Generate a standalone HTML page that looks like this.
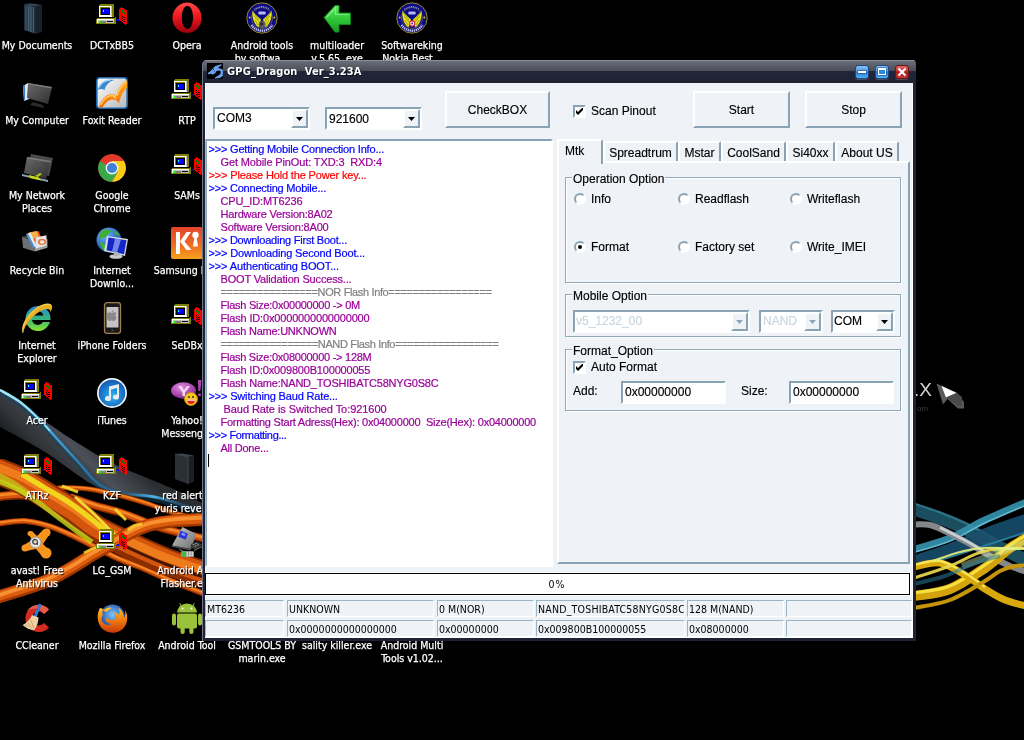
<!DOCTYPE html>
<html><head><meta charset="utf-8"><title>GPG_Dragon</title>
<style>
html,body{margin:0;padding:0;background:#000;}
body{width:1024px;height:740px;overflow:hidden;position:relative;font-family:"Liberation Sans",sans-serif;}
.abs,#win *{position:absolute;box-sizing:border-box;}
#desk{will-change:transform;position:absolute;left:0;top:0;width:1024px;height:740px;overflow:hidden;background:#000;}
.lbl{position:absolute;width:120px;text-align:center;color:#fff;font-family:"DejaVu Sans Condensed","DejaVu Sans",sans-serif;font-size:10.5px;line-height:13px;white-space:pre;text-shadow:1px 1px 1px #000;-webkit-text-stroke:.25px #fff;}
.ico{position:absolute;width:32px;height:32px;}
#win{will-change:transform;position:absolute;left:202px;top:60px;width:714px;height:581px;background:#1f2233;border-radius:5px 4px 0 0;overflow:hidden;}
#title{left:0;top:0;width:714px;height:23px;background:linear-gradient(#6e707c 0,#4a4c58 11px,#22263a 11px,#1f2233 23px);}
#ttext{left:25px;top:5px;letter-spacing:.14px;color:#fff;font-family:"DejaVu Sans Condensed","DejaVu Sans",sans-serif;font-weight:bold;font-size:11px;line-height:14px;white-space:pre;text-shadow:1px 1px 0 #0c0e18;}
#client{left:3px;top:23px;width:708px;height:555px;background:#eff3f7;overflow:hidden;box-shadow:inset 1px 0 0 #fff,inset -1px -1px 0 #fff}
.btn{border:2px solid;border-color:#fff #88a4b4 #88a4b4 #fff;background:#eff3f7;font-size:12px;text-align:center;color:#000;}
.sunk{border:2px solid;border-color:#88a4b4 #fff #fff #88a4b4;background:#fff;}
.t12{font-size:12px;line-height:14px;color:#000;white-space:pre;-webkit-text-stroke:.15px;}
.log{font-size:11px;line-height:13px;white-space:pre;-webkit-text-stroke:.2px;}
.b{color:#0000ff}.p{color:#990099}.r{color:#ff0000}.g{color:#808080}.m{color:#cc00cc}
.grp{border:1px solid #8fabbb;box-shadow:inset 1px 1px 0 #fff,1px 1px 0 #fff;}
.cell{border:1px solid;border-color:#9db5c3 #fff #fff #9db5c3;font-family:"DejaVu Sans Condensed","DejaVu Sans",sans-serif;font-size:10.5px;line-height:17px;white-space:pre;overflow:hidden;color:#000;padding-left:1px;height:17px;}
.tab{border:2px solid;border-color:#fff #88a4b4 #eff3f7 #fff;border-bottom:none;background:#eff3f7;border-radius:2px 2px 0 0;text-align:center;line-height:20px}
.gl{background:#eff3f7;padding:0 1px;}
.dis{color:#c8d6de;}
.rad{width:12px;height:12px;border-radius:50%;background:#fff;border:2px solid;border-color:#88a4b4 #fff #fff #88a4b4;transform:rotate(0deg)}
.rad i{left:2px;top:2px;width:4px;height:4px;border-radius:50%;background:#000;}
.tb{width:14px;height:14px;border:1px solid;border-radius:3px;box-shadow:0 1px 0 rgba(255,255,255,.18);}
</style></head><body>
<div id="desk">
<!--WS-->
<svg class="abs" style="left:0;top:0" width="1024" height="740" viewBox="0 0 1024 740">
<defs>
<linearGradient id="wGray" gradientUnits="userSpaceOnUse" x1="40" y1="470" x2="90" y2="420"><stop offset="0" stop-color="#1a1c1f"/><stop offset=".22" stop-color="#2e3135"/><stop offset=".45" stop-color="#3c4045"/><stop offset=".56" stop-color="#4c5159"/><stop offset="1" stop-color="#2b2e33"/></linearGradient>
<linearGradient id="wCy" gradientUnits="userSpaceOnUse" x1="0" y1="0" x2="205" y2="0"><stop offset="0" stop-color="#9ae4f6"/><stop offset=".2" stop-color="#4ab0e0"/><stop offset=".45" stop-color="#2a6c9c"/><stop offset=".62" stop-color="#2a5a80"/><stop offset=".75" stop-color="#4ab4e4"/><stop offset=".9" stop-color="#2a5a80" stop-opacity=".4"/><stop offset="1" stop-color="#2a5a80" stop-opacity="0"/></linearGradient>
<filter id="bl1" x="-5%" y="-5%" width="110%" height="110%"><feGaussianBlur stdDeviation="0.6"/></filter>
<filter id="bl2" x="-5%" y="-5%" width="110%" height="110%"><feGaussianBlur stdDeviation="1.6"/></filter>
</defs>
<g filter="url(#bl1)"><path d="M-2.0 388.0C1.7 390.3 14.3 398.0 20.0 402.0C25.7 406.0 26.7 408.0 32.0 412.0C37.3 416.0 45.2 421.3 52.0 426.0C58.8 430.7 63.3 434.0 73.0 440.0C82.7 446.0 96.8 455.3 110.0 462.0C123.2 468.7 140.3 475.0 152.0 480.0C163.7 485.0 170.3 487.5 180.0 492.0C189.7 496.5 205.0 504.5 210.0 507.0L210.0 516.0C201.7 513.3 173.3 503.3 160.0 500.0C146.7 496.7 138.7 497.5 130.0 496.0C121.3 494.5 114.0 492.8 108.0 491.0C102.0 489.2 97.8 486.8 94.0 485.0C90.2 483.2 89.8 483.2 85.0 480.0C80.2 476.8 71.7 470.7 65.0 466.0C58.3 461.3 51.8 456.3 45.0 452.0C38.2 447.7 31.5 444.2 24.0 440.0C16.5 435.8 4.0 429.2 0.0 427.0Z" fill="url(#wGray)"/>
<path d="M0.0 392.0C3.3 394.0 13.3 399.0 20.0 404.0C26.7 409.0 33.3 415.3 40.0 422.0C46.7 428.7 53.3 436.7 60.0 444.0C66.7 451.3 74.3 459.7 80.0 466.0C85.7 472.3 89.3 477.8 94.0 482.0C98.7 486.2 102.0 488.7 108.0 491.0C114.0 493.3 121.3 494.5 130.0 496.0C138.7 497.5 147.5 497.0 160.0 500.0C172.5 503.0 197.5 511.7 205.0 514.0" fill="none" stroke="#15405c" stroke-width="6" opacity=".55"/>
<path d="M0.0 390.0C3.3 392.0 13.3 397.0 20.0 402.0C26.7 407.0 33.3 413.3 40.0 420.0C46.7 426.7 53.3 434.7 60.0 442.0C66.7 449.3 74.3 457.7 80.0 464.0C85.7 470.3 89.3 475.8 94.0 480.0C98.7 484.2 102.0 486.7 108.0 489.0C114.0 491.3 121.3 492.5 130.0 494.0C138.7 495.5 147.5 495.0 160.0 498.0C172.5 501.0 197.5 509.7 205.0 512.0" fill="none" stroke="url(#wCy)" stroke-width="2.6"/>
<path d="M0.0 390.0C3.3 392.0 13.3 397.0 20.0 402.0C26.7 407.0 35.0 415.2 40.0 420.0C45.0 424.8 48.3 429.2 50.0 431.0" fill="none" stroke="#a8ecfa" stroke-width="1.6" opacity=".8"/></g>
<g fill="none" filter="url(#bl1)">
<path d="M-5.0 524.0C-0.2 523.5 15.0 520.7 24.0 521.0C33.0 521.3 40.5 523.5 48.7 526.0C56.9 528.5 65.0 532.3 73.0 536.0C81.0 539.7 89.3 544.2 97.0 548.0C104.7 551.8 111.2 555.5 119.0 559.0C126.8 562.5 135.4 565.3 143.6 568.7C151.8 572.1 156.9 575.1 168.0 579.6C179.1 584.1 203.0 593.3 210.0 596.0" stroke="#8a2c02" stroke-width="6"/><path d="M-5.0 523.6C-0.2 523.1 15.0 520.3 24.0 520.6C33.0 521.0 40.5 523.1 48.7 525.6C56.9 528.1 65.0 532.0 73.0 535.6C81.0 539.3 89.3 543.8 97.0 547.6C104.7 551.5 111.2 555.2 119.0 558.6C126.8 562.1 135.4 564.9 143.6 568.3C151.8 571.8 156.9 574.7 168.0 579.2C179.1 583.8 203.0 592.9 210.0 595.6" stroke="#d8560c" stroke-width="4.4"/><path d="M-5.0 523.2C-0.2 522.7 15.0 519.8 24.0 520.2C33.0 520.5 40.5 522.7 48.7 525.2C56.9 527.7 65.0 531.5 73.0 535.2C81.0 538.8 89.3 543.3 97.0 547.2C104.7 551.0 111.2 554.7 119.0 558.2C126.8 561.6 135.4 564.4 143.6 567.9C151.8 571.3 156.9 574.2 168.0 578.8C179.1 583.3 203.0 592.4 210.0 595.2" stroke="#f58a28" stroke-width="1.8"/>
<path d="M45.0 490.0C47.5 489.7 55.0 488.3 60.0 488.0C65.0 487.7 69.2 487.7 75.0 488.0C80.8 488.3 86.7 488.5 95.0 490.0C103.3 491.5 115.8 494.6 125.0 497.0C134.2 499.4 141.8 501.8 150.0 504.5C158.2 507.2 164.0 510.1 174.0 513.0C184.0 515.9 204.0 520.5 210.0 522.0" stroke="#8a2c02" stroke-width="5"/><path d="M45.0 489.7C47.5 489.4 55.0 488.0 60.0 487.7C65.0 487.4 69.2 487.4 75.0 487.7C80.8 488.0 86.7 488.2 95.0 489.7C103.3 491.2 115.8 494.3 125.0 496.7C134.2 499.1 141.8 501.5 150.0 504.2C158.2 506.9 164.0 509.8 174.0 512.7C184.0 515.6 204.0 520.2 210.0 521.7" stroke="#d8560c" stroke-width="3.7"/><path d="M45.0 489.3C47.5 489.0 55.0 487.6 60.0 487.3C65.0 487.0 69.2 487.0 75.0 487.3C80.8 487.6 86.7 487.8 95.0 489.3C103.3 490.8 115.8 493.9 125.0 496.3C134.2 498.7 141.8 501.1 150.0 503.8C158.2 506.5 164.0 509.4 174.0 512.3C184.0 515.2 204.0 519.8 210.0 521.3" stroke="#f58a28" stroke-width="1.5"/>
<path d="M70.0 497.0C74.2 498.4 86.8 503.2 95.0 505.7C103.2 508.2 111.9 509.8 119.0 512.0C126.1 514.2 132.4 517.0 137.6 519.0C142.8 521.0 144.9 522.2 150.0 524.0C155.1 525.8 158.0 527.3 168.0 530.0C178.0 532.7 203.0 538.3 210.0 540.0" stroke="#8a2c02" stroke-width="8"/><path d="M70.0 496.5C74.2 498.0 86.8 502.7 95.0 505.2C103.2 507.7 111.9 509.3 119.0 511.5C126.1 513.7 132.4 516.5 137.6 518.5C142.8 520.5 144.9 521.7 150.0 523.5C155.1 525.4 158.0 526.9 168.0 529.5C178.0 532.2 203.0 537.9 210.0 539.5" stroke="#d8560c" stroke-width="5.9"/><path d="M70.0 495.9C74.2 497.3 86.8 502.1 95.0 504.6C103.2 507.1 111.9 508.7 119.0 510.9C126.1 513.1 132.4 515.9 137.6 517.9C142.8 519.9 144.9 521.0 150.0 522.9C155.1 524.7 158.0 526.2 168.0 528.9C178.0 531.5 203.0 537.2 210.0 538.9" stroke="#f58a28" stroke-width="2.4"/>
<path d="M-5.0 497.0C-1.7 496.7 9.2 495.2 15.0 495.0C20.8 494.8 24.2 494.7 30.0 496.0C35.8 497.3 46.7 501.8 50.0 503.0" stroke="#8a2c02" stroke-width="9"/><path d="M-5.0 496.5C-1.7 496.1 9.2 494.6 15.0 494.5C20.8 494.3 24.2 494.1 30.0 495.5C35.8 496.8 46.7 501.3 50.0 502.5" stroke="#d8560c" stroke-width="6.7"/><path d="M-5.0 495.7C-1.7 495.4 9.2 493.9 15.0 493.7C20.8 493.6 24.2 493.4 30.0 494.7C35.8 496.1 46.7 500.6 50.0 501.7" stroke="#f58a28" stroke-width="2.7"/>
<path d="M-5.0 470.0C-0.2 472.0 15.0 477.5 24.0 482.0C33.0 486.5 40.5 491.8 49.0 497.0C57.5 502.2 67.3 507.8 75.0 513.0C82.7 518.2 85.7 522.5 95.0 528.0C104.3 533.5 118.8 540.3 131.0 546.0C143.2 551.7 154.8 557.0 168.0 562.0C181.2 567.0 203.0 573.7 210.0 576.0" stroke="#8a2e02" stroke-width="27"/><path d="M-5.0 468.4C-0.2 470.4 15.0 475.9 24.0 480.4C33.0 484.9 40.5 490.2 49.0 495.4C57.5 500.5 67.3 506.2 75.0 511.4C82.7 516.5 85.7 520.9 95.0 526.4C104.3 531.9 118.8 538.7 131.0 544.4C143.2 550.0 154.8 555.4 168.0 560.4C181.2 565.4 203.0 572.0 210.0 574.4" stroke="#d4540c" stroke-width="20.0"/><path d="M-5.0 466.2C-0.2 468.2 15.0 473.7 24.0 478.2C33.0 482.7 40.5 488.1 49.0 493.2C57.5 498.4 67.3 504.1 75.0 509.2C82.7 514.4 85.7 518.7 95.0 524.2C104.3 529.7 118.8 536.6 131.0 542.2C143.2 547.9 154.8 553.2 168.0 558.2C181.2 563.2 203.0 569.9 210.0 572.2" stroke="#ee7c1c" stroke-width="8.1"/>
<path d="M100.0 533.0C105.2 535.7 119.7 543.7 131.0 549.0C142.3 554.3 154.8 560.0 168.0 565.0C181.2 570.0 203.0 576.7 210.0 579.0" stroke="#200800" stroke-width="3" opacity=".8"/>
<path d="M22.0 474.0C25.8 476.3 37.0 483.2 45.0 488.0C53.0 492.8 61.7 497.3 70.0 503.0C78.3 508.7 88.0 516.2 95.0 522.0C102.0 527.8 109.2 535.3 112.0 538.0" stroke="#f0e020" stroke-width="5.5" opacity=".9"/>
<path d="M-5.0 474.0C-2.5 475.3 4.5 478.7 10.0 482.0C15.5 485.3 25.0 492.0 28.0 494.0" stroke="#c4cc18" stroke-width="7" opacity=".7"/>
<path d="M-5.0 480.0C-1.7 481.3 8.3 484.7 15.0 488.0C21.7 491.3 28.3 495.5 35.0 500.0C41.7 504.5 48.3 510.0 55.0 515.0C61.7 520.0 68.8 525.5 75.0 530.0C81.2 534.5 89.2 540.0 92.0 542.0" stroke="#c8d818" stroke-width="5" opacity=".8"/>
<path d="M75.0 497.0C77.8 499.5 86.5 506.8 92.0 512.0C97.5 517.2 103.3 523.3 108.0 528.0C112.7 532.7 118.0 538.0 120.0 540.0" stroke="#f8e838" stroke-width="3" opacity=".9"/>
<path d="M62.0 486.0C63.3 486.5 67.3 488.0 70.0 489.0C72.7 490.0 76.7 491.5 78.0 492.0" stroke="#f6dc30" stroke-width="3" opacity=".9"/>
<path d="M115.0 509.0C115.8 509.8 118.2 512.2 120.0 514.0C121.8 515.8 125.0 519.0 126.0 520.0" stroke="#f6dc30" stroke-width="3" opacity=".9"/>
<path d="M-5.0 598.0C-0.2 596.5 15.0 592.0 24.0 589.0C33.0 586.0 40.8 583.7 49.0 580.0C57.2 576.3 65.8 571.2 73.0 567.0C80.2 562.8 85.8 558.7 92.0 555.0C98.2 551.3 103.7 548.7 110.0 545.0C116.3 541.3 123.3 536.3 130.0 533.0C136.7 529.7 142.5 527.0 150.0 525.0C157.5 523.0 165.0 522.0 175.0 521.0C185.0 520.0 204.2 519.3 210.0 519.0" stroke="#a03804" stroke-width="13"/><path d="M-5.0 597.2C-0.2 595.7 15.0 591.2 24.0 588.2C33.0 585.2 40.8 582.9 49.0 579.2C57.2 575.6 65.8 570.4 73.0 566.2C80.2 562.1 85.8 557.9 92.0 554.2C98.2 550.6 103.7 547.9 110.0 544.2C116.3 540.6 123.3 535.6 130.0 532.2C136.7 528.9 142.5 526.2 150.0 524.2C157.5 522.2 165.0 521.2 175.0 520.2C185.0 519.2 204.2 518.6 210.0 518.2" stroke="#dc5c0c" stroke-width="9.6"/><path d="M-5.0 596.2C-0.2 594.7 15.0 590.2 24.0 587.2C33.0 584.2 40.8 581.8 49.0 578.2C57.2 574.5 65.8 569.3 73.0 565.2C80.2 561.0 85.8 556.8 92.0 553.2C98.2 549.5 103.7 546.8 110.0 543.2C116.3 539.5 123.3 534.5 130.0 531.2C136.7 527.8 142.5 525.2 150.0 523.2C157.5 521.2 165.0 520.2 175.0 519.2C185.0 518.2 204.2 517.5 210.0 517.2" stroke="#f89030" stroke-width="3.9"/>
<path d="M84.0 553.0C85.3 552.3 89.3 550.2 92.0 549.0C94.7 547.8 98.7 546.5 100.0 546.0" stroke="#f4d030" stroke-width="3" opacity=".85"/>
<path d="M128.0 530.0C129.0 529.3 131.7 527.0 134.0 526.0C136.3 525.0 140.7 524.3 142.0 524.0" stroke="#f4d030" stroke-width="3" opacity=".85"/>
</g>
<g fill="none" filter="url(#bl1)">
<path d="M912.0 508.5C916.7 510.1 931.2 514.7 940.0 518.0C948.8 521.3 955.8 524.0 965.0 528.5C974.2 533.0 984.2 539.4 995.0 545.0C1005.8 550.6 1024.2 559.2 1030.0 562.0" stroke="#1f6076" stroke-width="13" opacity="0.8"/>
<path d="M912.0 503.0C916.7 504.6 931.2 509.2 940.0 512.5C948.8 515.8 955.8 518.6 965.0 523.0C974.2 527.4 990.0 536.3 995.0 539.0" stroke="#3f93ab" stroke-width="2" opacity="0.55"/>
<path d="M912.0 556.0C918.3 553.8 937.0 548.0 950.0 543.0C963.0 538.0 976.7 531.1 990.0 526.0C1003.3 520.9 1023.3 514.8 1030.0 512.5L1030.0 532.0C1023.3 534.2 1003.3 540.7 990.0 545.0C976.7 549.3 963.0 554.3 950.0 558.0C937.0 561.7 918.3 565.5 912.0 567.0Z" fill="#19506e" opacity=".88"/>
<path d="M912.0 566.0C918.3 564.5 937.0 560.7 950.0 557.0C963.0 553.3 976.7 548.3 990.0 544.0C1003.3 539.7 1023.3 533.2 1030.0 531.0" stroke="#2f8eae" stroke-width="2" opacity="0.7"/>
<path d="M912.0 550.0C918.3 548.0 937.8 543.0 950.0 538.0C962.2 533.0 971.7 526.2 985.0 520.0C998.3 513.8 1022.5 503.8 1030.0 500.5" stroke="#3590ac" stroke-width="7" opacity="0.92"/>
<path d="M912.0 553.0C918.3 551.0 937.8 546.0 950.0 541.0C962.2 536.0 971.7 529.2 985.0 523.0C998.3 516.8 1022.5 506.8 1030.0 503.5" stroke="#72cce0" stroke-width="1.5" opacity="0.75"/>
<path d="M912.0 524.5C915.0 524.6 924.3 523.8 930.0 525.0C935.7 526.2 939.7 528.5 946.0 531.5C952.3 534.5 960.7 538.9 968.0 543.0C975.3 547.1 983.0 552.2 990.0 556.0C997.0 559.8 1003.3 563.2 1010.0 566.0C1016.7 568.8 1026.7 571.8 1030.0 573.0" stroke="#84868a" stroke-width="6" opacity="1"/>
<path d="M940.0 527.5C942.5 528.8 950.3 532.6 955.0 535.0C959.7 537.4 963.0 539.2 968.0 542.0C973.0 544.8 982.2 550.3 985.0 552.0" stroke="#d4e2e6" stroke-width="3" opacity="0.8"/>
<path d="M914.0 596.0C920.0 594.8 938.2 593.7 950.0 589.0C961.8 584.3 975.0 574.8 985.0 568.0C995.0 561.2 1002.5 553.3 1010.0 548.0C1017.5 542.7 1026.7 538.0 1030.0 536.0" stroke="#d4a20a" stroke-width="10" opacity="1"/>
<path d="M914.0 593.0C920.0 591.8 938.2 590.7 950.0 586.0C961.8 581.3 975.0 571.8 985.0 565.0C995.0 558.2 1002.5 550.3 1010.0 545.0C1017.5 539.7 1026.7 535.0 1030.0 533.0" stroke="#f6e040" stroke-width="3" opacity="1"/>
<path d="M914.0 567.0C918.3 566.3 931.5 561.7 940.0 563.0C948.5 564.3 957.5 570.7 965.0 575.0C972.5 579.3 978.3 584.8 985.0 589.0C991.7 593.2 997.5 597.0 1005.0 600.0C1012.5 603.0 1025.8 605.8 1030.0 607.0" stroke="#d8a80e" stroke-width="7" opacity="1"/>
<path d="M914.0 565.0C918.3 564.3 931.5 559.7 940.0 561.0C948.5 562.3 957.5 568.7 965.0 573.0C972.5 577.3 981.7 584.7 985.0 587.0" stroke="#f6e458" stroke-width="2.5" opacity="1"/>
<path d="M914.0 608.0C920.0 606.7 938.2 604.5 950.0 600.0C961.8 595.5 976.7 585.8 985.0 581.0C993.3 576.2 995.0 573.5 1000.0 571.0C1005.0 568.5 1010.0 567.0 1015.0 566.0C1020.0 565.0 1027.5 565.2 1030.0 565.0" stroke="#c49408" stroke-width="4" opacity="1"/>
<path d="M914.0 578.0C920.0 576.0 938.2 570.5 950.0 566.0C961.8 561.5 971.7 554.0 985.0 551.0C998.3 548.0 1022.5 548.5 1030.0 548.0" stroke="#ecdc50" stroke-width="3" opacity="0.9"/>
<path d="M933.0 561.0C937.5 559.5 951.5 554.2 960.0 552.0C968.5 549.8 972.3 548.5 984.0 548.0C995.7 547.5 1022.3 548.8 1030.0 549.0" stroke="#e4ee78" stroke-width="2.2" opacity="0.9"/>
<path d="M962.0 566.0C966.7 564.3 978.7 560.2 990.0 556.0C1001.3 551.8 1023.3 543.5 1030.0 541.0" stroke="#d8f4b0" stroke-width="7" opacity="0.4"/>
<path d="M914.0 584.0C919.2 582.7 934.8 579.5 945.0 576.0C955.2 572.5 965.8 566.3 975.0 563.0C984.2 559.7 995.8 557.2 1000.0 556.0" stroke="#2c7a98" stroke-width="4" opacity="0.55"/>
</g>
<text x="914" y="396" font-family="Liberation Sans, sans-serif" font-size="19" fill="#d4d4d4">.X</text>
<text x="917" y="411" font-family="Liberation Sans, sans-serif" font-size="8" fill="#3c3c3c">om</text>
<path d="M936.5 383.5L943 404.5L947.5 399L958 408.5L964 408.5L964 402L957 392.500Z" fill="#5a5a5a"/>
<path d="M941.5 386L946 397.500L956.500 393Z" fill="#fff"/>
<path d="M946 397.5L956.5 393L962 397L962 406L958 406Z" fill="#4a4a4a"/>
</svg>
<!--WE-->
<!--IS-->
<svg width="0" height="0" style="position:absolute"><defs>
<linearGradient id="gOpera" x1="0" y1="0" x2="0" y2="1"><stop offset="0" stop-color="#ff4a4a"/><stop offset=".45" stop-color="#f01820"/><stop offset="1" stop-color="#98000c"/></linearGradient>
<linearGradient id="gArrow" x1="0" y1="0" x2="0" y2="1"><stop offset="0" stop-color="#5ee85e"/><stop offset=".5" stop-color="#30c838"/><stop offset="1" stop-color="#1c9a24"/></linearGradient>
<linearGradient id="gBook" x1="0" y1="0" x2="1" y2="0"><stop offset="0" stop-color="#1e2c3a"/><stop offset=".5" stop-color="#34485a"/><stop offset="1" stop-color="#1a2632"/></linearGradient>
<linearGradient id="gMon" x1="0" y1="0" x2="1" y2="1"><stop offset="0" stop-color="#6a6a6a"/><stop offset="1" stop-color="#2e2e2e"/></linearGradient>
<linearGradient id="gKies" x1="0" y1="0" x2="0" y2="1"><stop offset="0" stop-color="#e2452c"/><stop offset=".55" stop-color="#ee6a22"/><stop offset="1" stop-color="#f7a11e"/></linearGradient>
<radialGradient id="gTunes" cx=".5" cy=".6" r=".6"><stop offset="0" stop-color="#30b4f4"/><stop offset="1" stop-color="#1258b0"/></radialGradient>
<radialGradient id="gYah" cx=".4" cy=".3" r=".8"><stop offset="0" stop-color="#e48ae0"/><stop offset="1" stop-color="#7a1a86"/></radialGradient>
<radialGradient id="gGlobe" cx=".35" cy=".3" r=".8"><stop offset="0" stop-color="#6ab4ff"/><stop offset="1" stop-color="#0a3aa0"/></radialGradient>
<linearGradient id="gIE" x1="0" y1="0" x2="0" y2="1"><stop offset="0" stop-color="#2a86d8"/><stop offset=".55" stop-color="#38b878"/><stop offset="1" stop-color="#8ee030"/></linearGradient>
<linearGradient id="gFoxit" x1="0" y1="0" x2="1" y2="1"><stop offset="0" stop-color="#ffffff"/><stop offset="1" stop-color="#b8b8b8"/></linearGradient>
<linearGradient id="gOr" x1="0" y1="0" x2="0" y2="1"><stop offset="0" stop-color="#ffb020"/><stop offset="1" stop-color="#f06a08"/></linearGradient>
<radialGradient id="gFF" cx=".5" cy=".4" r=".6"><stop offset="0" stop-color="#7ac8ff"/><stop offset="1" stop-color="#123c9a"/></radialGradient>
<linearGradient id="gFox" x1="0" y1="0" x2="0" y2="1"><stop offset="0" stop-color="#ffc428"/><stop offset=".5" stop-color="#f07a10"/><stop offset="1" stop-color="#c83808"/></linearGradient>
<linearGradient id="gPda" x1="0" y1="0" x2="1" y2="1"><stop offset="0" stop-color="#c8c8c8"/><stop offset="1" stop-color="#6e6e6e"/></linearGradient>
</defs></svg>

<svg class="ico" style="left:21px;top:2px" viewBox="0 0 32 32"><path d="M3 2l12 2v28l-12-4z" fill="url(#gBook)"/><path d="M15 4l6-1v27l-6 2z" fill="#16212c"/><path d="M5 3.500v25M7.500 4v25M10 4.500v25.500M12.500 5v26" stroke="#4a6276" stroke-width=".9"/><path d="M3 2l12 2 6-1-11-1.500z" fill="#3c4e5e"/></svg>
<div class="lbl" style="left:-23px;top:39px">My Documents</div>
<svg class="ico" style="left:90px;top:0px;width:44px;height:32px" viewBox="0 0 44 32" shape-rendering="crispEdges"><path d="M10 4h14v13h-2v1h-13v-13z" fill="#808000"/><rect x="9" y="6" width="13" height="11" fill="#fff"/><rect x="21" y="6" width="1" height="10" fill="#c0c0c0"/><rect x="10" y="7" width="10" height="8" fill="#808000"/><rect x="11" y="8" width="9" height="7" fill="#000"/><rect x="12" y="9" width="7" height="5" fill="#0000ff"/><rect x="13" y="10" width="1" height="2" fill="#00ffff"/><rect x="9" y="17" width="14" height="1" fill="#000"/><path d="M6 19h1v-1h17l2-2v7l-1 1h-19z" fill="#808000"/><rect x="7" y="19" width="17" height="1" fill="#fff"/><rect x="7" y="20" width="1" height="3" fill="#fff"/><rect x="8" y="20" width="16" height="3" fill="#c0c0c0"/><rect x="9" y="21" width="2" height="2" fill="#00ff00"/><rect x="11" y="21" width="5" height="2" fill="#808080"/><rect x="17" y="21" width="6" height="1" fill="#000"/><path d="M26 20h1v-1h2v2h-1v-1h-1v1h-1z" fill="#0000ff"/><path d="M29 9l2-2 2 1 1 1 2 1 1 1v12l-1 2-2-1-2-2-2-1-1-1z" fill="#ff0000"/><path d="M31 10l2 0 2 3v1l-2 0-2-3z" fill="#008000"/><path d="M31 15h1v1h-1zM32 16h1v1h-1zM33 17h2v1h-2zM31 17h1v1h-1zM32 18h1v1h-1zM33 19h2v1h-2zM31 19h1v1h-1zM32 20h1v1h-1zM33 21h2v1h-2zM33 23h1v1h-1z" fill="#300000"/></svg>
<div class="lbl" style="left:52px;top:39px">DCTxBB5</div>
<svg class="ico" style="left:171px;top:2px" viewBox="0 0 32 32"><path fill-rule="evenodd" fill="url(#gOpera)" d="M16 0.600a14.600 15.200 0 1 0 .01 0zM16.400 3.800a5.600 11.600 0 1 1-.01 0z"/></svg>
<div class="lbl" style="left:127px;top:39px">Opera</div>
<svg class="ico" style="left:246px;top:2px" viewBox="0 0 32 32"><circle cx="16" cy="16" r="15.2" fill="#0c0c86" stroke="#9a8a1e" stroke-width="1"/><circle cx="16" cy="16" r="10.5" fill="none" stroke="#8c8a40" stroke-width=".6"/><path d="M6.5 8.5c1 2 4 5 8.5 9l-2.5 8c-4-3-7-9-6-17z" fill="#e8e01c"/><path d="M25.5 8.500c-1 2-4 5-8.500 9l2.500 8c4-3 7-9 6-17z" fill="#e8e01c"/><path d="M7 10l6 8M8 14l5 6M9 18l3 5M25 10l-6 8M24 14l-5 6M23 18l-3 5" stroke="#8a8a10" stroke-width=".7" fill="none"/><rect x="12.300" y="9.500" width="7.400" height="3" rx="1.3" fill="#b8b8ee"/><path d="M5.500 23a12.500 12.500 0 0 0 21 0" fill="none" stroke="#c8c8f4" stroke-width="2.400" stroke-dasharray="1.300 .7"/><path d="M8.500 7.500a11.500 11.500 0 0 1 15 0" fill="none" stroke="#9a9ade" stroke-width="1.300" stroke-dasharray="1 .8"/><circle cx="3.700" cy="15.500" r=".9" fill="#d8cc20"/><circle cx="28.300" cy="15.500" r=".9" fill="#d8cc20"/><circle cx="16.200" cy="22.500" r="3.400" fill="#5e5e5e"/><circle cx="15.600" cy="22" r="1.800" fill="#2c2c2c"/></svg>
<div class="lbl" style="left:202px;top:39px">Android tools<br>by softwa...</div>
<svg class="ico" style="left:321px;top:2px" viewBox="0 0 32 32"><path d="M3 15.500L14 3.500l4 0v7.500h11.500v11.500h-11.500v7.500h-4z" fill="url(#gArrow)" stroke="#128a1c" stroke-width="1"/><path d="M5.500 15.500L14.500 6v6.500h13" fill="none" stroke="#9af49a" stroke-width="1.200" opacity=".7"/></svg>
<div class="lbl" style="left:277px;top:39px">multiloader<br>v.5.65 .exe</div>
<svg class="ico" style="left:396px;top:2px" viewBox="0 0 32 32"><circle cx="16" cy="16" r="15.2" fill="#0c0c86" stroke="#9a8a1e" stroke-width="1"/><circle cx="16" cy="16" r="10.5" fill="none" stroke="#8c8a40" stroke-width=".6"/><path d="M6.5 8.5c1 2 4 5 8.5 9l-2.5 8c-4-3-7-9-6-17z" fill="#e8e01c"/><path d="M25.5 8.500c-1 2-4 5-8.500 9l2.500 8c4-3 7-9 6-17z" fill="#e8e01c"/><path d="M7 10l6 8M8 14l5 6M9 18l3 5M25 10l-6 8M24 14l-5 6M23 18l-3 5" stroke="#8a8a10" stroke-width=".7" fill="none"/><rect x="12.300" y="9.500" width="7.400" height="3" rx="1.3" fill="#b8b8ee"/><path d="M5.500 23a12.500 12.500 0 0 0 21 0" fill="none" stroke="#c8c8f4" stroke-width="2.400" stroke-dasharray="1.300 .7"/><path d="M8.500 7.500a11.500 11.500 0 0 1 15 0" fill="none" stroke="#9a9ade" stroke-width="1.300" stroke-dasharray="1 .8"/><circle cx="3.700" cy="15.500" r=".9" fill="#d8cc20"/><circle cx="28.300" cy="15.500" r=".9" fill="#d8cc20"/><circle cx="16.200" cy="21.500" r="2.600" fill="#fff" stroke="#e03030" stroke-width="1.200"/><circle cx="16.200" cy="21.500" r="1" fill="#2030c0"/></svg>
<div class="lbl" style="left:352px;top:39px">Softwareking<br>Nokia Best...</div>
<svg class="ico" style="left:21px;top:77px" viewBox="0 0 32 32"><path d="M2 9l5-3 1 16-5 2z" fill="#dfe9f2"/><path d="M2 9l2-1v14l-1 2z" fill="#3a7ac0"/><path d="M7 6l24 4-4 17-21-6z" fill="url(#gMon)"/><path d="M7 6l24 4-.5 1.500-23.500-4z" fill="#7a7a7a"/><path d="M12 25l10 3 1 3-14-3z" fill="#2a2a2a"/></svg>
<div class="lbl" style="left:-23px;top:114px">My Computer</div>
<svg class="ico" style="left:96px;top:77px" viewBox="0 0 32 32"><rect x=".8" y=".8" width="30.400" height="30.400" rx="3" fill="url(#gFoxit)" stroke="#1a64a8" stroke-width="1.600"/><path d="M2 13c1-7 8-11 16-10c-5 1.500-8 5-9.500 10c-2-1.500-4.500-1.500-6.500 0z" fill="#3a8ad0"/><path d="M2.500 11c2-5 7-8 12-8" fill="none" stroke="#a8d4f4" stroke-width="1.600"/><path d="M3 30.500c1.500-7 6.500-13 12.500-13.500c2 0 3.500 1 4.500 2.500c1.500-7 5.500-13.500 11-16v7.500c-4 3-6.500 8-8 15c-2-3-4.500-4-7.500-3.500c-4 1-7 4-9 8z" fill="url(#gOr)"/><path d="M5 28c2-5 6-9 10.500-9.500c2 0 3.500 1 4.500 3M21 19c1.500-6 5-11 9.500-14" fill="none" stroke="#ffd060" stroke-width="1.300"/></svg>
<div class="lbl" style="left:52px;top:114px">Foxit Reader</div>
<svg class="ico" style="left:165px;top:75px;width:44px;height:32px" viewBox="0 0 44 32" shape-rendering="crispEdges"><path d="M10 4h14v13h-2v1h-13v-13z" fill="#808000"/><rect x="9" y="6" width="13" height="11" fill="#fff"/><rect x="21" y="6" width="1" height="10" fill="#c0c0c0"/><rect x="10" y="7" width="10" height="8" fill="#808000"/><rect x="11" y="8" width="9" height="7" fill="#000"/><rect x="12" y="9" width="7" height="5" fill="#0000ff"/><rect x="13" y="10" width="1" height="2" fill="#00ffff"/><rect x="9" y="17" width="14" height="1" fill="#000"/><path d="M6 19h1v-1h17l2-2v7l-1 1h-19z" fill="#808000"/><rect x="7" y="19" width="17" height="1" fill="#fff"/><rect x="7" y="20" width="1" height="3" fill="#fff"/><rect x="8" y="20" width="16" height="3" fill="#c0c0c0"/><rect x="9" y="21" width="2" height="2" fill="#00ff00"/><rect x="11" y="21" width="5" height="2" fill="#808080"/><rect x="17" y="21" width="6" height="1" fill="#000"/><path d="M26 20h1v-1h2v2h-1v-1h-1v1h-1z" fill="#0000ff"/><path d="M29 9l2-2 2 1 1 1 2 1 1 1v12l-1 2-2-1-2-2-2-1-1-1z" fill="#ff0000"/><path d="M31 10l2 0 2 3v1l-2 0-2-3z" fill="#008000"/><path d="M31 15h1v1h-1zM32 16h1v1h-1zM33 17h2v1h-2zM31 17h1v1h-1zM32 18h1v1h-1zM33 19h2v1h-2zM31 19h1v1h-1zM32 20h1v1h-1zM33 21h2v1h-2zM33 23h1v1h-1z" fill="#300000"/></svg>
<div class="lbl" style="left:127px;top:114px">RTP</div>
<svg class="ico" style="left:21px;top:152px" viewBox="0 0 32 32"><path d="M10 2l22 4-4 18-22-5z" fill="#4a4a4a"/><path d="M6 5l24 4-5 18-22-6z" fill="url(#gMon)"/><path d="M6 5l24 4-.4 1.400-23.800-4z" fill="#7c7c7c"/><path d="M1 22l26 6v2l-26-6z" fill="#8aa4ae"/><path d="M8 23l10 2.500 2 3-11-2.500z" fill="#c8dc14"/><path d="M14 24l5-3 2 1-4 3z" fill="#b4c810"/></svg>
<div class="lbl" style="left:-23px;top:189px">My Network<br>Places</div>
<svg class="ico" style="left:96px;top:152px" viewBox="0 0 32 32"><g transform="translate(16 16) scale(.955) translate(-16 -16)"><circle cx="16" cy="16" r="14.500" fill="#e2392c"/><path d="M16 16L3.440 8.750A14.500 14.500 0 0 0 16 30.500L22.280 19.630z" fill="#38a84a"/><path d="M16 16l6.280 3.630L16 30.500A14.500 14.500 0 0 0 28.560 8.750H16z" fill="#f8cc18"/><path d="M16 16L3.440 8.750A14.500 14.500 0 0 1 28.560 8.750H16z" fill="#e2392c"/><circle cx="16" cy="16" r="6.700" fill="#f4f4f4"/><circle cx="16" cy="16" r="5.300" fill="#3c82d8"/></g></svg>
<div class="lbl" style="left:52px;top:189px">Google<br>Chrome</div>
<svg class="ico" style="left:165px;top:150px;width:44px;height:32px" viewBox="0 0 44 32" shape-rendering="crispEdges"><path d="M10 4h14v13h-2v1h-13v-13z" fill="#808000"/><rect x="9" y="6" width="13" height="11" fill="#fff"/><rect x="21" y="6" width="1" height="10" fill="#c0c0c0"/><rect x="10" y="7" width="10" height="8" fill="#808000"/><rect x="11" y="8" width="9" height="7" fill="#000"/><rect x="12" y="9" width="7" height="5" fill="#0000ff"/><rect x="13" y="10" width="1" height="2" fill="#00ffff"/><rect x="9" y="17" width="14" height="1" fill="#000"/><path d="M6 19h1v-1h17l2-2v7l-1 1h-19z" fill="#808000"/><rect x="7" y="19" width="17" height="1" fill="#fff"/><rect x="7" y="20" width="1" height="3" fill="#fff"/><rect x="8" y="20" width="16" height="3" fill="#c0c0c0"/><rect x="9" y="21" width="2" height="2" fill="#00ff00"/><rect x="11" y="21" width="5" height="2" fill="#808080"/><rect x="17" y="21" width="6" height="1" fill="#000"/><path d="M26 20h1v-1h2v2h-1v-1h-1v1h-1z" fill="#0000ff"/><path d="M29 9l2-2 2 1 1 1 2 1 1 1v12l-1 2-2-1-2-2-2-1-1-1z" fill="#ff0000"/><path d="M31 10l2 0 2 3v1l-2 0-2-3z" fill="#008000"/><path d="M31 15h1v1h-1zM32 16h1v1h-1zM33 17h2v1h-2zM31 17h1v1h-1zM32 18h1v1h-1zM33 19h2v1h-2zM31 19h1v1h-1zM32 20h1v1h-1zM33 21h2v1h-2zM33 23h1v1h-1z" fill="#300000"/></svg>
<div class="lbl" style="left:127px;top:189px">SAMs</div>
<svg class="ico" style="left:21px;top:227px" viewBox="0 0 32 32"><g transform="translate(0 2.5) scale(.98 .73)"><path d="M1 10l13 6v14l-12-5z" fill="#6c7074"/><path d="M14 16l13-3v12l-13 5z" fill="#9aa0a4"/><path d="M1 10l12-4 14 7-13 3z" fill="#45494c"/><path d="M6 5l12-3 3 11-9 5z" fill="#e8601c"/><path d="M8 4l8-2 2 8-6 3z" fill="#f8b048"/><path d="M5 6l4 0 6 18-3 1z" fill="#4a90d8"/><path d="M7 5l3 0 6 18-2 1z" fill="#dfe9f4"/><path d="M15 11l11-3v14l-11 4z" fill="#e4e6e8"/><circle cx="21.500" cy="17" r="3.300" fill="none" stroke="#e87838" stroke-width="1.800"/></g></svg>
<div class="lbl" style="left:-23px;top:264px">Recycle Bin</div>
<svg class="ico" style="left:96px;top:227px" viewBox="0 0 32 32"><circle cx="13" cy="13" r="12.500" fill="url(#gGlobe)"/><path d="M6 4c3-2 7-2 9 0c-1 3-4 3-5 6c-2 1-4 0-5 3c-2-3-1-7 1-9zM4 15c2 0 4 2 6 4c0 3-1 4-2 5c-2-2-4-5-4-9zM17 3c3 1 6 3 7 6l-4-1z" fill="#40b030"/><path d="M11 9l21 3-3 17-21-5z" fill="#d8dcde"/><path d="M12.500 10.500l18 2.700-2.500 14-17.500-4z" fill="#1426c8"/><path d="M19 11.500l6 1-4 13-5-1z" fill="#8aa0f0" opacity=".8"/><ellipse cx="20" cy="29.500" rx="6.500" ry="2.300" fill="#c8cccc"/><path d="M18 25h4v4h-4z" fill="#b0b4b4"/></svg>
<div class="lbl" style="left:52px;top:264px">Internet<br>Downlo...</div>
<svg class="ico" style="left:171px;top:227px" viewBox="0 0 32 32"><rect x="0" y="0" width="32" height="32" rx="2" fill="url(#gKies)"/><path d="M5 5h4v22h-4zM9 14.500L15.500 5h4.500l-6.500 9.500 7 8.500h-5z" fill="#fff"/><circle cx="24.500" cy="8" r="3.200" fill="#fff"/><path d="M23.400 10h2.200l1.400 9.500h-5z" fill="#fff"/></svg>
<div class="lbl" style="left:127px;top:264px">Samsung Kies</div>
<svg class="ico" style="left:21px;top:302px" viewBox="0 0 32 32"><path fill-rule="evenodd" d="M17 4a12.500 12.500 0 1 0 12 16h-7a6 6 0 0 1-11-2h18.500a12.500 12.500 0 0 0-12.500-14zM11 13.500a6 6 0 0 1 11.500 0z" fill="url(#gIE)"/><path d="M2 31c-3-6 3-18 13-25c7-5 15-6 16-2c.5 2-.5 4-1.500 6c0-3-3-4-8-2c-9 4-18 15-19.500 23z" fill="#e8b020"/><path d="M2 31c-2-6 4-17 13-24c6-4.500 13-6 15.500-3.500" fill="none" stroke="#f8dc70" stroke-width=".8"/></svg>
<div class="lbl" style="left:-23px;top:339px">Internet<br>Explorer</div>
<svg class="ico" style="left:96px;top:302px" viewBox="0 0 32 32"><rect x="8.500" y=".7" width="16" height="30.600" rx="2.500" fill="#1a1a1a" stroke="#a08050" stroke-width="1.300"/><rect x="10.500" y="5" width="12" height="20.500" fill="#c4c4c4"/><path d="M16.500 11c1.800-1.600 4 0 4 0c-1.600 1-1.600 3.600.3 4.500c-.6 2-2 3.500-3 3.500s-1.300-.5-2.300-.5s-1.300.5-2.200.5c-1.200 0-3-3-2.800-5.500c.2-2.500 2.400-3.600 3.800-3s1.600.6 2.200.5zM17.500 8.300c.2 1.400-1 2.400-1.800 2.400c-.2-1.200.8-2.300 1.800-2.400z" fill="#8a8a8a"/><circle cx="16.500" cy="28.300" r="1.300" fill="#3a3a3a"/></svg>
<div class="lbl" style="left:52px;top:339px">iPhone Folders</div>
<svg class="ico" style="left:165px;top:300px;width:44px;height:32px" viewBox="0 0 44 32" shape-rendering="crispEdges"><path d="M10 4h14v13h-2v1h-13v-13z" fill="#808000"/><rect x="9" y="6" width="13" height="11" fill="#fff"/><rect x="21" y="6" width="1" height="10" fill="#c0c0c0"/><rect x="10" y="7" width="10" height="8" fill="#808000"/><rect x="11" y="8" width="9" height="7" fill="#000"/><rect x="12" y="9" width="7" height="5" fill="#0000ff"/><rect x="13" y="10" width="1" height="2" fill="#00ffff"/><rect x="9" y="17" width="14" height="1" fill="#000"/><path d="M6 19h1v-1h17l2-2v7l-1 1h-19z" fill="#808000"/><rect x="7" y="19" width="17" height="1" fill="#fff"/><rect x="7" y="20" width="1" height="3" fill="#fff"/><rect x="8" y="20" width="16" height="3" fill="#c0c0c0"/><rect x="9" y="21" width="2" height="2" fill="#00ff00"/><rect x="11" y="21" width="5" height="2" fill="#808080"/><rect x="17" y="21" width="6" height="1" fill="#000"/><path d="M26 20h1v-1h2v2h-1v-1h-1v1h-1z" fill="#0000ff"/><path d="M29 9l2-2 2 1 1 1 2 1 1 1v12l-1 2-2-1-2-2-2-1-1-1z" fill="#ff0000"/><path d="M31 10l2 0 2 3v1l-2 0-2-3z" fill="#008000"/><path d="M31 15h1v1h-1zM32 16h1v1h-1zM33 17h2v1h-2zM31 17h1v1h-1zM32 18h1v1h-1zM33 19h2v1h-2zM31 19h1v1h-1zM32 20h1v1h-1zM33 21h2v1h-2zM33 23h1v1h-1z" fill="#300000"/></svg>
<div class="lbl" style="left:127px;top:339px">SeDBx</div>
<svg class="ico" style="left:15px;top:375px;width:44px;height:32px" viewBox="0 0 44 32" shape-rendering="crispEdges"><path d="M10 4h14v13h-2v1h-13v-13z" fill="#808000"/><rect x="9" y="6" width="13" height="11" fill="#fff"/><rect x="21" y="6" width="1" height="10" fill="#c0c0c0"/><rect x="10" y="7" width="10" height="8" fill="#808000"/><rect x="11" y="8" width="9" height="7" fill="#000"/><rect x="12" y="9" width="7" height="5" fill="#0000ff"/><rect x="13" y="10" width="1" height="2" fill="#00ffff"/><rect x="9" y="17" width="14" height="1" fill="#000"/><path d="M6 19h1v-1h17l2-2v7l-1 1h-19z" fill="#808000"/><rect x="7" y="19" width="17" height="1" fill="#fff"/><rect x="7" y="20" width="1" height="3" fill="#fff"/><rect x="8" y="20" width="16" height="3" fill="#c0c0c0"/><rect x="9" y="21" width="2" height="2" fill="#00ff00"/><rect x="11" y="21" width="5" height="2" fill="#808080"/><rect x="17" y="21" width="6" height="1" fill="#000"/><path d="M26 20h1v-1h2v2h-1v-1h-1v1h-1z" fill="#0000ff"/><path d="M29 9l2-2 2 1 1 1 2 1 1 1v12l-1 2-2-1-2-2-2-1-1-1z" fill="#ff0000"/><path d="M31 10l2 0 2 3v1l-2 0-2-3z" fill="#008000"/><path d="M31 15h1v1h-1zM32 16h1v1h-1zM33 17h2v1h-2zM31 17h1v1h-1zM32 18h1v1h-1zM33 19h2v1h-2zM31 19h1v1h-1zM32 20h1v1h-1zM33 21h2v1h-2zM33 23h1v1h-1z" fill="#300000"/></svg>
<div class="lbl" style="left:-23px;top:414px">Acer</div>
<svg class="ico" style="left:96px;top:377px" viewBox="0 0 32 32"><circle cx="16" cy="16" r="15" fill="#f0f4f8"/><circle cx="16" cy="16" r="13.300" fill="url(#gTunes)"/><path d="M13 9.500l10-2.500v13a3 2.500 0 1 1-2-2.300v-6.700l-6 1.500v9a3 2.500 0 1 1-2-2.300z" fill="#e8ecee"/></svg>
<div class="lbl" style="left:52px;top:414px">iTunes</div>
<svg class="ico" style="left:171px;top:377px" viewBox="0 0 32 32"><ellipse cx="12.500" cy="13.500" rx="12.500" ry="8.300" fill="url(#gYah)"/><path d="M7 9h3.500l2.500 4 3-4h3l-5 6.500v3.500h-2.500v-3.500z" fill="#f0d8f0"/><path d="M27 3h3.500l-1.200 11h-2zM27.300 16.500h2.500v2.500h-2.500z" fill="#b044b8"/><circle cx="20" cy="22" r="6.500" fill="#f8c818" stroke="#c88a10" stroke-width=".8"/><path d="M16 22.500h8c0 3-1.700 4.500-4 4.500s-4-1.500-4-4.500z" fill="#e02020"/><path d="M16 22.500h8v1.200h-8z" fill="#fff"/><circle cx="18" cy="20" r=".9" fill="#222"/><circle cx="22" cy="20" r=".9" fill="#222"/></svg>
<div class="lbl" style="left:127px;top:414px">Yahoo!<br>Messenger</div>
<svg class="ico" style="left:15px;top:450px;width:44px;height:32px" viewBox="0 0 44 32" shape-rendering="crispEdges"><path d="M10 4h14v13h-2v1h-13v-13z" fill="#808000"/><rect x="9" y="6" width="13" height="11" fill="#fff"/><rect x="21" y="6" width="1" height="10" fill="#c0c0c0"/><rect x="10" y="7" width="10" height="8" fill="#808000"/><rect x="11" y="8" width="9" height="7" fill="#000"/><rect x="12" y="9" width="7" height="5" fill="#0000ff"/><rect x="13" y="10" width="1" height="2" fill="#00ffff"/><rect x="9" y="17" width="14" height="1" fill="#000"/><path d="M6 19h1v-1h17l2-2v7l-1 1h-19z" fill="#808000"/><rect x="7" y="19" width="17" height="1" fill="#fff"/><rect x="7" y="20" width="1" height="3" fill="#fff"/><rect x="8" y="20" width="16" height="3" fill="#c0c0c0"/><rect x="9" y="21" width="2" height="2" fill="#00ff00"/><rect x="11" y="21" width="5" height="2" fill="#808080"/><rect x="17" y="21" width="6" height="1" fill="#000"/><path d="M26 20h1v-1h2v2h-1v-1h-1v1h-1z" fill="#0000ff"/><path d="M29 9l2-2 2 1 1 1 2 1 1 1v12l-1 2-2-1-2-2-2-1-1-1z" fill="#ff0000"/><path d="M31 10l2 0 2 3v1l-2 0-2-3z" fill="#008000"/><path d="M31 15h1v1h-1zM32 16h1v1h-1zM33 17h2v1h-2zM31 17h1v1h-1zM32 18h1v1h-1zM33 19h2v1h-2zM31 19h1v1h-1zM32 20h1v1h-1zM33 21h2v1h-2zM33 23h1v1h-1z" fill="#300000"/></svg>
<div class="lbl" style="left:-23px;top:489px">ATRz</div>
<svg class="ico" style="left:90px;top:450px;width:44px;height:32px" viewBox="0 0 44 32" shape-rendering="crispEdges"><path d="M10 4h14v13h-2v1h-13v-13z" fill="#808000"/><rect x="9" y="6" width="13" height="11" fill="#fff"/><rect x="21" y="6" width="1" height="10" fill="#c0c0c0"/><rect x="10" y="7" width="10" height="8" fill="#808000"/><rect x="11" y="8" width="9" height="7" fill="#000"/><rect x="12" y="9" width="7" height="5" fill="#0000ff"/><rect x="13" y="10" width="1" height="2" fill="#00ffff"/><rect x="9" y="17" width="14" height="1" fill="#000"/><path d="M6 19h1v-1h17l2-2v7l-1 1h-19z" fill="#808000"/><rect x="7" y="19" width="17" height="1" fill="#fff"/><rect x="7" y="20" width="1" height="3" fill="#fff"/><rect x="8" y="20" width="16" height="3" fill="#c0c0c0"/><rect x="9" y="21" width="2" height="2" fill="#00ff00"/><rect x="11" y="21" width="5" height="2" fill="#808080"/><rect x="17" y="21" width="6" height="1" fill="#000"/><path d="M26 20h1v-1h2v2h-1v-1h-1v1h-1z" fill="#0000ff"/><path d="M29 9l2-2 2 1 1 1 2 1 1 1v12l-1 2-2-1-2-2-2-1-1-1z" fill="#ff0000"/><path d="M31 10l2 0 2 3v1l-2 0-2-3z" fill="#008000"/><path d="M31 15h1v1h-1zM32 16h1v1h-1zM33 17h2v1h-2zM31 17h1v1h-1zM32 18h1v1h-1zM33 19h2v1h-2zM31 19h1v1h-1zM32 20h1v1h-1zM33 21h2v1h-2zM33 23h1v1h-1z" fill="#300000"/></svg>
<div class="lbl" style="left:52px;top:489px">KZF</div>
<svg class="ico" style="left:171px;top:452px" viewBox="0 0 32 32"><path d="M4 2l13 3v27l-13-5z" fill="#2a3036"/><path d="M17 5l6-1.500v26l-6 2.500z" fill="#1c2024"/><path d="M4 2l13 3 6-1.500-12-2z" fill="#3c444c"/><path d="M4 2l13 3v27" fill="none" stroke="#4a545c" stroke-width=".7"/></svg>
<div class="lbl" style="left:127px;top:489px">red alert 2<br>yuris revenge</div>
<svg class="ico" style="left:21px;top:527px" viewBox="0 0 32 32"><g fill="#f7941d"><circle cx="25.500" cy="5.500" r="4"/><circle cx="9" cy="6.500" r="2.500"/><circle cx="4" cy="21" r="3.500"/><circle cx="25" cy="26" r="5.500"/><path d="M22 3l6 5-6 9 6 6-7 6-6-7-10 2-2-6 8-5-4-7 4-2 5 5z"/></g><circle cx="14.500" cy="15.500" r="5.500" fill="#e4e4e4" stroke="#8a8a8a" stroke-width=".8"/><path d="M17 18h-1.200v-.8a3 3 0 1 1 1.200-2.400z M14.200 13.300a1.600 1.600 0 1 0 .01 0z" fill="#4a4a4a" fill-rule="evenodd"/></svg>
<div class="lbl" style="left:-23px;top:564px">avast! Free<br>Antivirus</div>
<svg class="ico" style="left:90px;top:525px;width:44px;height:32px" viewBox="0 0 44 32" shape-rendering="crispEdges"><path d="M10 4h14v13h-2v1h-13v-13z" fill="#808000"/><rect x="9" y="6" width="13" height="11" fill="#fff"/><rect x="21" y="6" width="1" height="10" fill="#c0c0c0"/><rect x="10" y="7" width="10" height="8" fill="#808000"/><rect x="11" y="8" width="9" height="7" fill="#000"/><rect x="12" y="9" width="7" height="5" fill="#0000ff"/><rect x="13" y="10" width="1" height="2" fill="#00ffff"/><rect x="9" y="17" width="14" height="1" fill="#000"/><path d="M6 19h1v-1h17l2-2v7l-1 1h-19z" fill="#808000"/><rect x="7" y="19" width="17" height="1" fill="#fff"/><rect x="7" y="20" width="1" height="3" fill="#fff"/><rect x="8" y="20" width="16" height="3" fill="#c0c0c0"/><rect x="9" y="21" width="2" height="2" fill="#00ff00"/><rect x="11" y="21" width="5" height="2" fill="#808080"/><rect x="17" y="21" width="6" height="1" fill="#000"/><path d="M26 20h1v-1h2v2h-1v-1h-1v1h-1z" fill="#0000ff"/><path d="M29 9l2-2 2 1 1 1 2 1 1 1v12l-1 2-2-1-2-2-2-1-1-1z" fill="#ff0000"/><path d="M31 10l2 0 2 3v1l-2 0-2-3z" fill="#008000"/><path d="M31 15h1v1h-1zM32 16h1v1h-1zM33 17h2v1h-2zM31 17h1v1h-1zM32 18h1v1h-1zM33 19h2v1h-2zM31 19h1v1h-1zM32 20h1v1h-1zM33 21h2v1h-2zM33 23h1v1h-1z" fill="#300000"/></svg>
<div class="lbl" style="left:52px;top:564px">LG_GSM</div>
<svg class="ico" style="left:171px;top:527px" viewBox="0 0 32 32"><path d="M11.400 0L25.500 7L20 22L1 18.400Z" fill="url(#gPda)"/><path d="M9.500 3.500l7.500 3.200-2.300 6-7.500-3z" fill="#2a34d8"/><path d="M11 5.500l3.500 1.500-.8 2.200-3.500-1.500z" fill="#8a96f8"/><path d="M1 18.400L20 22l-.6 1.600L.6 19.800z" fill="#4e4e4e"/><path d="M20 17l6-2.500 5.500 3-7 4.500-5-1z" fill="#3c3c3c"/><path d="M21.500 17.500l1-.5 1 .6-1 .5zM24 16.500l1-.5 1 .6-1 .5zM23.500 19l1-.5 1 .6-1 .5zM26 18l1-.5 1 .6-1 .5z" fill="#c8c8c8"/><path d="M8 22.500l4 1.500M23 23.500l8-4" stroke="#6a6a6a" stroke-width="1.200" fill="none"/><rect x="10" y="24" width="13" height="6" rx="1.200" fill="#8e8e8e"/><rect x="11.500" y="24.600" width="2.600" height="4.800" fill="#28c828"/><path d="M15.500 25.200h1.600v1.600h-1.600zM18 25.200h1.600v1.600h-1.600zM20.500 25.200h1.600v1.600h-1.600zM15.500 27.600h1.600v1.600h-1.600zM18 27.600h1.600v1.600h-1.600zM20.500 27.600h1.600v1.600h-1.600z" fill="#ececec"/></svg>
<div class="lbl" style="left:127px;top:564px">Android ADB<br>Flasher.exe</div>
<svg class="ico" style="left:21px;top:602px" viewBox="0 0 32 32"><path d="M28 7.500a13.500 13.500 0 1 0 0 18l-5-4.500a7 7 0 1 1 0-9z" fill="#d42a20"/><path d="M28 7.500a13.500 13.500 0 0 0-22 2c4-4 12-5 17 2.500z" fill="#e85a4a"/><path d="M18 1.500l2.500 1-5 13-3-1.200z" fill="#2a7ad8"/><path d="M11 13l6.500 2.500c0 3-1 8-4 12.500c-4 0-9-2-12-5c4-2 8-6 9.500-10z" fill="#f0d0a0"/><path d="M4 23l3 1.500M7 21l3.500 5M10 18.500l3 8" stroke="#b89868" stroke-width=".8"/></svg>
<div class="lbl" style="left:-23px;top:639px">CCleaner</div>
<svg class="ico" style="left:96px;top:602px" viewBox="0 0 32 32"><circle cx="16.500" cy="15" r="12.500" fill="url(#gFF)"/><path d="M4 6c-4 7-3 17 4 22c7 5 17 3 21-4c3-5 3-12 0-16c1 4 0 6-1 8c0-4-2-8-6-10c2 3 2 5 1 7c-1-2-4-3-6-2c3 1 4 4 2 6c-2 2-5 1-6 0c-2-1-3-1-4 0c1 3 4 5 7 5c-3 2-8 1-10-3c-1-3 0-5 1-6c-1-2-1-4 0-5c1 1 2 2 4 2c1-2 3-3 5-4c-3-1-6 0-8 2c-1-1-2-2-4-2z" fill="url(#gFox)"/></svg>
<div class="lbl" style="left:52px;top:639px">Mozilla Firefox</div>
<svg class="ico" style="left:171px;top:602px" viewBox="0 0 32 32"><g fill="#9ac23a"><path d="M6 10.500a10 9 0 0 1 20 0z"/><rect x="6" y="11.500" width="20" height="15" rx="2"/><rect x="1" y="11.500" width="4" height="12" rx="2"/><rect x="27" y="11.500" width="4" height="12" rx="2"/><rect x="9.500" y="24" width="4.200" height="8" rx="2"/><rect x="18.300" y="24" width="4.200" height="8" rx="2"/><path d="M9 1l2 3.500-.7.400-2-3.500zM23 1l-2 3.500.7.400 2-3.500z"/></g><circle cx="11.500" cy="6.500" r="1" fill="#fff"/><circle cx="20.500" cy="6.500" r="1" fill="#fff"/></svg>
<div class="lbl" style="left:127px;top:639px">Android Tool</div>
<div class="lbl" style="left:202px;top:639px">GSMTOOLS BY<br>marin.exe</div>
<div class="lbl" style="left:277px;top:639px">sality killer.exe</div>
<div class="lbl" style="left:352px;top:639px">Android Multi<br>Tools v1.02...</div>
<!--IE-->
</div>
<div id="win">
 <div id="title">
  <div style="left:0;top:0;width:714px;height:1px;background:#8e909c"></div>
  <div style="left:0;top:0;width:1px;height:581px;background:#74768a"></div>
  <svg style="left:5px;top:3px" width="16" height="16" viewBox="0 0 16 16"><rect width="16" height="16" fill="#000"/><path d="M.9 9.900L3 8.500L5.800 5.500L8.200 3.100L10.900 2.300L14.200 1.200L15 2L12.500 3.500L11 5L13 5.500L15.800 6.400L16 9L15.800 13.100L13 15L8 15.600L8 14.500L10.100 13.200L13.100 11.300L13.900 8.800L12.500 7.600L9.500 8L8.800 9.600L7 11L5.300 11.800L4.500 10.800L2.500 11L1 11.200Z" fill="#6aa0ee"/><circle cx="6.500" cy="6.400" r=".6" fill="#081830"/><circle cx="7.400" cy="8.400" r=".5" fill="#284878"/></svg>
  <div id="ttext">GPG_Dragon  Ver_3.23A</div>
  <div class="tb" style="left:653px;top:5px;background:linear-gradient(#8cc4f4 0,#4a94e0 45%,#2a7cd4 55%,#52b4f4 100%);border-color:#1c4a84"></div>
  <div style="left:656px;top:11px;width:8px;height:2px;background:#fff;box-shadow:0 0 0 .5px #1c4a84"></div>
  <div class="tb" style="left:673px;top:5px;background:linear-gradient(#8cc4f4 0,#4a94e0 45%,#2a7cd4 55%,#52b4f4 100%);border-color:#1c4a84"></div>
  <div style="left:676px;top:8px;width:8px;height:7px;border:1px solid #fff;border-top-width:2px;background:#2a8ae0;box-shadow:0 0 0 .5px #1c4a84"></div>
  <div class="tb" style="left:693px;top:5px;background:linear-gradient(#e06a6a 0,#c02c2c 45%,#a81818 55%,#c83c3c 100%);border-color:#6a1414"></div>
  <svg style="left:693px;top:5px" width="14" height="14" viewBox="0 0 14 14"><path d="M3.500 3.500L10.500 10.500M10.500 3.500L3.500 10.500" stroke="#fff" stroke-width="2.200"/></svg>
 </div>
 <div id="client">
<!--CS-->
 <!-- toolbar -->
 <div class="sunk" style="left:8px;top:24px;width:97px;height:23px"></div>
 <div class="t12" style="left:12px;top:28px">COM3</div>
 <div class="btn" style="left:86px;top:26px;width:17px;height:19px"></div>
 <svg style="left:91px;top:34px" width="7" height="4"><path d="M0 0h7L3.5 4z" fill="#000"/></svg>
 <div class="sunk" style="left:120px;top:24px;width:97px;height:23px"></div>
 <div class="t12" style="left:124px;top:29px">921600</div>
 <div class="btn" style="left:198px;top:26px;width:17px;height:19px"></div>
 <svg style="left:203px;top:34px" width="7" height="4"><path d="M0 0h7L3.5 4z" fill="#000"/></svg>
 <div class="btn t12" style="left:240px;top:8px;width:105px;height:37px;line-height:34px">CheckBOX</div>
 <div class="sunk" style="left:368px;top:22px;width:13px;height:13px"></div>
 <svg style="left:371px;top:25px" width="7" height="7"><path d="M0 2v3l2 2 5-5v-3l-5 5z" fill="#000"/></svg>
 <div class="t12" style="left:386px;top:21px">Scan Pinout</div>
 <div class="btn t12" style="left:488px;top:8px;width:97px;height:37px;line-height:34px">Start</div>
 <div class="btn t12" style="left:600px;top:8px;width:97px;height:37px;line-height:34px">Stop</div>
 <!-- log -->
 <div class="sunk" style="left:0px;top:56px;width:348px;height:428px;border-left-color:#a3bdc9"></div><div style="left:1px;top:58px;width:1px;height:424px;background:#8aa7b7"></div>
 <div id="log" style="left:0;top:58px;width:346px;height:424px;overflow:hidden">
<!--LS--><div class="log b" style="top:2px;left:3.5px;letter-spacing:-0.190px">&gt;&gt;&gt; Getting Mobile Connection Info...</div>
<div class="log p" style="top:15px;left:15.5px;letter-spacing:-0.129px">Get Mobile PinOut: TXD:3  RXD:4</div>
<div class="log r" style="top:28px;left:3.5px;letter-spacing:-0.148px">&gt;&gt;&gt; Please Hold the Power key...</div>
<div class="log b" style="top:41px;left:3.5px;letter-spacing:-0.213px">&gt;&gt;&gt; Connecting Mobile...</div>
<div class="log p" style="top:54px;left:15.5px;letter-spacing:-0.136px">CPU_ID:MT6236</div>
<div class="log p" style="top:67px;left:15.5px;letter-spacing:-0.199px">Hardware Version:8A02</div>
<div class="log p" style="top:80px;left:15.5px;letter-spacing:-0.186px">Software Version:8A00</div>
<div class="log b" style="top:93px;left:3.5px;letter-spacing:-0.232px">&gt;&gt;&gt; Downloading First Boot...</div>
<div class="log b" style="top:106px;left:3.5px;letter-spacing:-0.155px">&gt;&gt;&gt; Downloading Second Boot...</div>
<div class="log b" style="top:119px;left:3.5px;letter-spacing:-0.120px">&gt;&gt;&gt; Authenticating BOOT...</div>
<div class="log p" style="top:132px;left:15.5px;letter-spacing:-0.166px">BOOT Validation Success...</div>
<div class="log g" style="top:145px;left:15.5px;letter-spacing:-0.357px">================NOR Flash Info=================</div>
<div class="log p" style="top:158px;left:15.5px;letter-spacing:-0.258px">Flash Size:0x00000000 -&gt; 0M</div>
<div class="log p" style="top:171px;left:15.5px;letter-spacing:-0.167px">Flash ID:0x0000000000000000</div>
<div class="log p" style="top:184px;left:15.5px;letter-spacing:-0.245px">Flash Name:UNKNOWN</div>
<div class="log g" style="top:197px;left:15.5px;letter-spacing:-0.344px">================NAND Flash Info=================</div>
<div class="log p" style="top:210px;left:15.5px;letter-spacing:-0.265px">Flash Size:0x08000000 -&gt; 128M</div>
<div class="log p" style="top:223px;left:15.5px;letter-spacing:-0.185px">Flash ID:0x009800B100000055</div>
<div class="log p" style="top:236px;left:15.5px;letter-spacing:-0.211px">Flash Name:NAND_TOSHIBATC58NYG0S8C</div>
<div class="log b" style="top:249px;left:3.5px;letter-spacing:-0.168px">&gt;&gt;&gt; Switching Baud Rate...</div>
<div class="log p" style="top:262px;left:18.5px;letter-spacing:-0.062px">Baud Rate is Switched To:921600</div>
<div class="log p" style="top:275px;left:15.5px;letter-spacing:-0.233px">Formatting Start Adress(Hex): 0x04000000  Size(Hex): 0x04000000</div>
<div class="log b" style="top:288px;left:3.5px;letter-spacing:-0.358px">&gt;&gt;&gt; Formatting...</div>
<div class="log p" style="top:301px;left:15.5px;letter-spacing:-0.250px">All Done...</div>
<div style="left:3px;top:313px;width:1px;height:13px;background:#000"></div>
<!--LE--> </div>
 <!-- tabs -->
 <div id="pane" style="left:352px;top:78px;width:353px;height:403px;border:2px solid;border-color:#fff #88a4b4 #88a4b4 #fff"></div>
<!--PS-->
 <!-- tab headers: screen coords minus (205,83) -->
 <div class="tab t12" style="left:398px;top:58px;width:75px;height:20px">Spreadtrum</div>
 <div class="tab t12" style="left:473px;top:58px;width:43px;height:20px">Mstar</div>
 <div class="tab t12" style="left:516px;top:58px;width:65px;height:20px">CoolSand</div>
 <div class="tab t12" style="left:581px;top:58px;width:49px;height:20px">Si40xx</div>
 <div class="tab t12" style="left:630px;top:58px;width:64px;height:20px">About US</div>
 <div class="tab t12" style="left:352px;top:56px;width:46px;height:25px;line-height:16px;padding:2px 0 0 6px;text-align:left">Mtk</div>
 <!-- Operation Option -->
 <div class="grp" style="left:360px;top:94px;width:336px;height:106px"></div>
 <div class="t12 gl" style="left:367px;top:89px">Operation Option</div>
 <div class="rad" style="left:369px;top:110px"></div><div class="t12" style="left:386px;top:109px">Info</div>
 <div class="rad" style="left:473px;top:110px"></div><div class="t12" style="left:490px;top:109px">Readflash</div>
 <div class="rad" style="left:585px;top:110px"></div><div class="t12" style="left:602px;top:109px">Writeflash</div>
 <div class="rad" style="left:369px;top:158px"><i></i></div><div class="t12" style="left:386px;top:157px">Format</div>
 <div class="rad" style="left:473px;top:158px"></div><div class="t12" style="left:490px;top:157px">Factory set</div>
 <div class="rad" style="left:585px;top:158px"></div><div class="t12" style="left:602px;top:157px">Write_IMEI</div>
 <!-- Mobile Option -->
 <div class="grp" style="left:360px;top:211px;width:336px;height:43px"></div>
 <div class="t12 gl" style="left:367px;top:206px">Mobile Option</div>
 <div class="sunk" style="left:368px;top:227px;width:177px;height:23px"></div>
 <div class="t12 dis" style="left:371px;top:231px">v5_1232_00</div>
 <div class="btn" style="left:526px;top:229px;width:17px;height:19px"></div>
 <svg style="left:531px;top:237px" width="7" height="4"><path d="M0 0h7L3.5 4z" fill="#8aa6b6"/></svg>
 <div class="sunk" style="left:554px;top:227px;width:64px;height:23px"></div>
 <div class="t12 dis" style="left:558px;top:231px">NAND</div>
 <div class="btn" style="left:599px;top:229px;width:17px;height:19px"></div>
 <svg style="left:604px;top:237px" width="7" height="4"><path d="M0 0h7L3.5 4z" fill="#8aa6b6"/></svg>
 <div class="sunk" style="left:626px;top:227px;width:64px;height:23px"></div>
 <div class="t12" style="left:629px;top:231px">COM</div>
 <div class="btn" style="left:671px;top:229px;width:17px;height:19px"></div>
 <svg style="left:676px;top:237px" width="7" height="4"><path d="M0 0h7L3.5 4z" fill="#000"/></svg>
 <!-- Format Option -->
 <div class="grp" style="left:360px;top:266px;width:336px;height:62px"></div>
 <div class="t12 gl" style="left:367px;top:261px">Format_Option</div>
 <div class="sunk" style="left:368px;top:278px;width:13px;height:13px"></div>
 <svg style="left:371px;top:281px" width="7" height="7"><path d="M0 2v3l2 2 5-5v-3l-5 5z" fill="#000"/></svg>
 <div class="t12" style="left:386px;top:277px">Auto Format</div>
 <div class="t12" style="left:368px;top:301px">Add:</div>
 <div class="sunk" style="left:416px;top:298px;width:105px;height:23px"></div>
 <div class="t12" style="left:420px;top:302px">0x00000000</div>
 <div class="t12" style="left:536px;top:301px">Size:</div>
 <div class="sunk" style="left:584px;top:298px;width:105px;height:23px"></div>
 <div class="t12" style="left:588px;top:302px">0x00000000</div>
<!--PE-->
 <!-- progress -->
 <div style="left:0px;top:490px;width:705px;height:22px;border:1px solid #000;background:#fff;box-shadow:0 0 0 1px #fff"></div>
 <div style="left:0;top:495px;width:704px;letter-spacing:1px;text-align:center;font-family:'DejaVu Sans Condensed','DejaVu Sans',sans-serif;font-size:10.5px;line-height:13px;color:#000">0%</div>
 <!-- status -->
 <div class="cell" style="left:0px;top:517px;width:79px">MT6236</div>
 <div class="cell" style="left:82px;top:517px;width:147px">UNKNOWN</div>
 <div class="cell" style="left:232px;top:517px;width:97px">0 M(NOR)</div>
 <div class="cell" style="left:331px;top:517px;width:149px;letter-spacing:.2px">NAND_TOSHIBATC58NYG0S8C</div>
 <div class="cell" style="left:482px;top:517px;width:97px">128 M(NAND)</div>
 <div class="cell" style="left:581px;top:517px;width:126px"></div>
 <div class="cell" style="left:0px;top:537px;width:79px"></div>
 <div class="cell" style="left:82px;top:537px;width:147px">0x0000000000000000</div>
 <div class="cell" style="left:232px;top:537px;width:97px">0x00000000</div>
 <div class="cell" style="left:331px;top:537px;width:149px">0x009800B100000055</div>
 <div class="cell" style="left:482px;top:537px;width:97px">0x08000000</div>
 <div class="cell" style="left:581px;top:537px;width:126px"></div>
<!--CE-->
 </div>
</div>
</body></html>
